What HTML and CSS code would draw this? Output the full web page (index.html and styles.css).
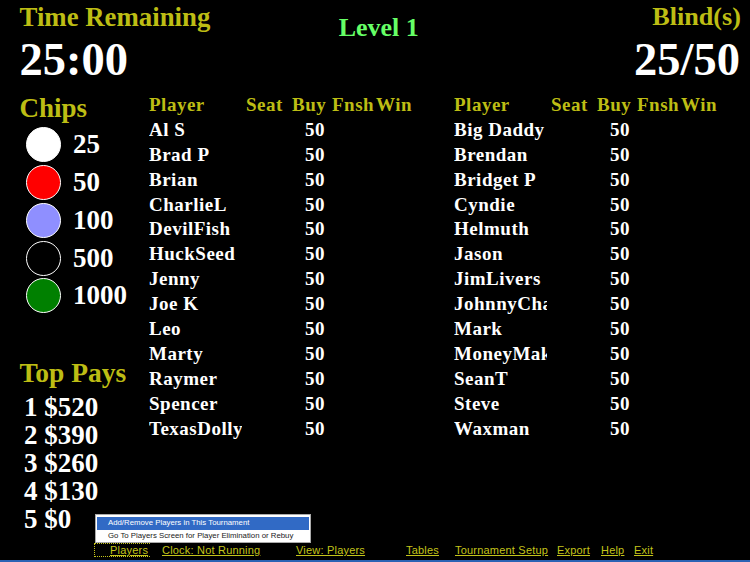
FILE: index.html
```html
<!DOCTYPE html>
<html lang="en">
<head>
<meta charset="utf-8">
<title>Tournament Clock</title>
<link rel="stylesheet" href="styles.css">
</head>
<body>
<div class="screen">
  <header class="top">
    <div class="stat">
      <div class="label">Time Remaining</div>
      <div class="big">25:00</div>
    </div>
    <div class="level">Level 1</div>
    <div class="stat right">
      <div class="label blind">Blind(s)</div>
      <div class="big blind-value">25/50</div>
    </div>
  </header>
  <main class="main">
    <aside class="side">
      <h2 class="side-title chips-title">Chips</h2>
      <ul class="chips">
        <li class="chip"><span class="dot white"></span>25</li>
        <li class="chip"><span class="dot red"></span>50</li>
        <li class="chip"><span class="dot blue"></span>100</li>
        <li class="chip"><span class="dot black"></span>500</li>
        <li class="chip"><span class="dot green"></span>1000</li>
      </ul>
      <h2 class="side-title pays-title">Top Pays</h2>
      <ol class="pays">
        <li>1 $520</li>
        <li>2 $390</li>
        <li>3 $260</li>
        <li>4 $130</li>
        <li>5 $0</li>
      </ol>
    </aside>
    <section class="players">
      <div class="row head"><span class="name">Player</span><span>Seat</span><span>Buy</span><span>Fnsh</span><span>Win</span></div>
      <div class="row"><span class="name">Al S</span><span></span><span class="buy">50</span></div>
      <div class="row"><span class="name">Brad P</span><span></span><span class="buy">50</span></div>
      <div class="row"><span class="name">Brian</span><span></span><span class="buy">50</span></div>
      <div class="row"><span class="name">CharlieL</span><span></span><span class="buy">50</span></div>
      <div class="row"><span class="name">DevilFish</span><span></span><span class="buy">50</span></div>
      <div class="row"><span class="name">HuckSeed</span><span></span><span class="buy">50</span></div>
      <div class="row"><span class="name">Jenny</span><span></span><span class="buy">50</span></div>
      <div class="row"><span class="name">Joe K</span><span></span><span class="buy">50</span></div>
      <div class="row"><span class="name">Leo</span><span></span><span class="buy">50</span></div>
      <div class="row"><span class="name">Marty</span><span></span><span class="buy">50</span></div>
      <div class="row"><span class="name">Raymer</span><span></span><span class="buy">50</span></div>
      <div class="row"><span class="name">Spencer</span><span></span><span class="buy">50</span></div>
      <div class="row"><span class="name">TexasDolly</span><span></span><span class="buy">50</span></div>
    </section>
    <section class="players">
      <div class="row head"><span class="name">Player</span><span>Seat</span><span>Buy</span><span>Fnsh</span><span>Win</span></div>
      <div class="row"><span class="name">Big Daddy</span><span></span><span class="buy">50</span></div>
      <div class="row"><span class="name">Brendan</span><span></span><span class="buy">50</span></div>
      <div class="row"><span class="name">Bridget P</span><span></span><span class="buy">50</span></div>
      <div class="row"><span class="name">Cyndie</span><span></span><span class="buy">50</span></div>
      <div class="row"><span class="name">Helmuth</span><span></span><span class="buy">50</span></div>
      <div class="row"><span class="name">Jason</span><span></span><span class="buy">50</span></div>
      <div class="row"><span class="name">JimLivers</span><span></span><span class="buy">50</span></div>
      <div class="row"><span class="name">JohnnyCha</span><span></span><span class="buy">50</span></div>
      <div class="row"><span class="name">Mark</span><span></span><span class="buy">50</span></div>
      <div class="row"><span class="name">MoneyMaker</span><span></span><span class="buy">50</span></div>
      <div class="row"><span class="name">SeanT</span><span></span><span class="buy">50</span></div>
      <div class="row"><span class="name">Steve</span><span></span><span class="buy">50</span></div>
      <div class="row"><span class="name">Waxman</span><span></span><span class="buy">50</span></div>
    </section>
  </main>
  <nav class="nav">
    <a class="link current">Players</a>
    <a class="link w-clock">Clock: Not Running</a>
    <a class="link w-view">View: Players</a>
    <a class="link w-tables">Tables</a>
    <a class="link w-setup">Tournament Setup</a>
    <a class="link w-export">Export</a>
    <a class="link w-help">Help</a>
    <a class="link">Exit</a>
  </nav>
  <div class="menu">
    <div class="menu-item active">Add/Remove Players in This Tournament</div>
    <div class="menu-item">Go To Players Screen for Player Elimination or Rebuy</div>
  </div>
</div>
</body>
</html>
```
FILE: styles.css
```css
* { box-sizing: border-box; }
html, body { margin: 0; padding: 0; background: #000; }
.screen {
  position: relative;
  width: 750px;
  height: 562px;
  overflow: hidden;
  background: #000;
  border-bottom: 2px solid #2b62b4;
  font-family: "Liberation Serif", "Times New Roman", serif;
  font-weight: bold;
  color: #fff;
}
.top {
  display: grid;
  grid-template-columns: 1fr auto 1fr;
  height: 92px;
  padding: 0 9px 0 19.5px;
}
.stat { display: flex; flex-direction: column; }
.stat.right { align-items: flex-end; }
.label { font-size: 26.8px; line-height: 34px; color: #bdbd14; }
.blind { font-size: 26.2px; }
.big { font-size: 46.5px; line-height: 50px; margin-top: 1px; }
.blind-value { margin-right: 1px; }
.level { font-size: 26px; line-height: 30px; color: #66ff66; margin-top: 13px; margin-right: 3px; }
.main { display: flex; height: 450px; }
.side { width: 149px; padding-left: 19.5px; flex: none; }
.side-title { margin: 0; font-size: 27px; line-height: 34px; color: #bdbd14; font-weight: bold; }
.chips-title { line-height: 32px; margin-bottom: 2px; }
.chips { list-style: none; margin: 0; padding: 0 0 0 6.5px; }
.chip { display: flex; align-items: center; height: 37.75px; font-size: 27px; }
.dot { width: 35px; height: 35px; border-radius: 50%; border: 1.5px solid #fff; margin-right: 12px; flex: none; }
.white { background: #fff; }
.red { background: #f00; }
.blue { background: #8f8fff; }
.black { background: #000; }
.green { background: #008000; }
.pays-title { margin-top: 41px; font-size: 27.5px; }
.pays { list-style: none; margin: 3px 0 0; padding: 0 0 0 4.5px; font-size: 27px; line-height: 28px; }
.players { width: 305px; flex: none; }
.row {
  display: grid;
  grid-template-columns: 97px 46px 40px 44px 60px;
  height: 24.9px;
  line-height: 25px;
  font-size: 19px;
  letter-spacing: 0.5px;
  white-space: nowrap;
}
.head { color: #bdbd14; }
.name { overflow: hidden; width: 93px; }
.row .buy { padding-left: 13px; }
.nav {
  position: absolute;
  left: 94px;
  top: 543px;
  display: flex;
  height: 14px;
  font-family: "Liberation Sans", Arial, sans-serif;
  font-weight: normal;
  font-size: 11px;
  line-height: 14px;
  letter-spacing: 0.2px;
  color: #c4c41a;
}
.link { text-decoration: underline; flex: none; }
.current { width: 56px; padding-left: 15px; border: 1px dotted #c4c41a; border-width: 1px 0 1px 1px; line-height: 12px; }
.w-clock { margin-left: 12px; width: 134px; }
.w-view { width: 110px; }
.w-tables { width: 49px; }
.w-setup { width: 102px; }
.w-export { width: 44px; }
.w-help { width: 33px; }
.menu {
  position: absolute;
  left: 95px;
  top: 514px;
  width: 216px;
  height: 29px;
  padding: 2px 1px;
  background: #fff;
  border: 1px solid #aaa;
  font-family: "Liberation Sans", Arial, sans-serif;
  font-weight: normal;
  font-size: 7.8px;
  color: #222;
}
.menu-item { height: 12.5px; line-height: 12.5px; padding-left: 11px; white-space: nowrap; }
.active { background: #316ac5; color: #fff; }
```
